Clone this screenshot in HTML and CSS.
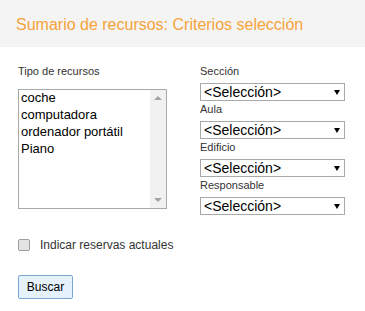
FILE: index.html
```html
<!DOCTYPE html>
<html lang="es">
<head>
  <meta charset="UTF-8" />
  <meta name="viewport" content="width=device-width, initial-scale=1.0"/>
  <title>Sumario de recursos</title>
  <link rel="stylesheet" href="styles.css">
</head>
<body>

  <div class="header">
    <h1>Sumario de recursos: Criterios selección</h1>
  </div>

  <div class="content">
    <div class="criteria">
      <div class="col-left">
        <label class="field-label">Tipo de recursos</label>
        <div class="listbox">
          <ul class="list-items">
            <li>coche</li>
            <li>computadora</li>
            <li>ordenador portátil</li>
            <li>Piano</li>
          </ul>
          <div class="scrollbar">
            <span class="arrow-up"></span>
            <span class="arrow-down"></span>
          </div>
        </div>
      </div>

      <div class="col-right">
        <label class="field-label">Sección</label>
        <div class="dropdown"><select><option>&lt;Selección&gt;</option></select></div>
        <label class="field-label">Aula</label>
        <div class="dropdown"><select><option>&lt;Selección&gt;</option></select></div>
        <label class="field-label">Edificio</label>
        <div class="dropdown"><select><option>&lt;Selección&gt;</option></select></div>
        <label class="field-label">Responsable</label>
        <div class="dropdown"><select><option>&lt;Selección&gt;</option></select></div>
      </div>
    </div>

    <div class="check-row">
      <input type="checkbox" id="actuales">
      <label for="actuales">Indicar reservas actuales</label>
    </div>

    <button class="btn-search">Buscar</button>
  </div>

</body>
</html>
```

FILE: styles.css
```css
* {
  margin: 0;
  padding: 0;
  box-sizing: border-box;
  font-family: 'Liberation Sans', Arial, sans-serif;
}

body {
  background: #ffffff;
  color: #333;
}

.header {
  background: #f4f4f4;
  height: 47px;
  padding: 15px 16px 0;
}

.header h1 {
  font-size: 16px;
  font-weight: normal;
  line-height: 19px;
  color: #f6a23a;
}

.content {
  padding: 18px 18px 0;
}

.criteria {
  display: flex;
  gap: 33px;
}

.col-left {
  width: 149px;
  display: flex;
  flex-direction: column;
}

.field-label {
  display: block;
  font-size: 11px;
  line-height: 13px;
  color: #333;
}

.col-left .field-label {
  margin-bottom: 11px;
}

.listbox {
  height: 120px;
  border: 1px solid #a9a9a9;
  display: flex;
  background: #fff;
}

.list-items {
  list-style: none;
  flex-grow: 1;
  margin-top: -1px;
}

.list-items li {
  font-size: 13px;
  line-height: 17px;
  padding-left: 2px;
  color: #000;
}

.scrollbar {
  width: 16px;
  background: #f1f1f1;
  display: flex;
  flex-direction: column;
  justify-content: space-between;
  align-items: center;
  padding: 6px 0;
}

.arrow-up, .arrow-down {
  width: 0;
  height: 0;
  border-left: 4px solid transparent;
  border-right: 4px solid transparent;
}

.arrow-up {
  border-bottom: 4px solid #a3a3a3;
}

.arrow-down {
  border-top: 4px solid #a3a3a3;
}

.col-right {
  width: 145px;
  display: flex;
  flex-direction: column;
}

.col-right .field-label {
  margin-bottom: 5px;
}

.col-right .dropdown + .field-label {
  margin-top: 2px;
}

.dropdown {
  position: relative;
  height: 18px;
}

.dropdown select {
  appearance: none;
  -webkit-appearance: none;
  width: 100%;
  height: 18px;
  border: 1px solid #a9a9a9;
  background: #fff;
  font-size: 14px;
  color: #000;
  padding: 0 0 0 3px;
  line-height: 16px;
  outline: none;
}

.dropdown::after {
  content: "";
  position: absolute;
  right: 5px;
  top: 7px;
  border-left: 3px solid transparent;
  border-right: 3px solid transparent;
  border-top: 5px solid #000;
  pointer-events: none;
}

.check-row {
  display: flex;
  align-items: center;
  margin-top: 23px;
}

.check-row input {
  appearance: none;
  -webkit-appearance: none;
  width: 12px;
  height: 12px;
  border: 1px solid #a0a0a0;
  border-radius: 2px;
  background: #e3e3e3;
  margin-right: 10px;
}

.check-row label {
  font-size: 12px;
  color: #333;
}

.btn-search {
  margin-top: 23px;
  width: 55px;
  height: 24px;
  background: #e5f1fb;
  border: 1px solid #7aa6d6;
  border-radius: 2px;
  font-size: 12px;
  color: #000;
}
```
